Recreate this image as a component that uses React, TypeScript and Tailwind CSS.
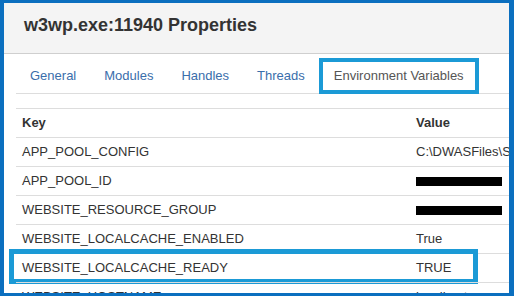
const rows: { key: string; value: string; redacted?: boolean; marked?: boolean }[] = [
  { key: "APP_POOL_CONFIG", value: "C:\\DWASFiles\\Sites" },
  { key: "APP_POOL_ID", value: "", redacted: true },
  { key: "WEBSITE_RESOURCE_GROUP", value: "", redacted: true },
  { key: "WEBSITE_LOCALCACHE_ENABLED", value: "True" },
  { key: "WEBSITE_LOCALCACHE_READY", value: "TRUE", marked: true },
  { key: "WEBSITE_HOSTNAME", value: "localhost" },
];

const tabs = ["General", "Modules", "Handles", "Threads"];

export default function App() {
  return (
    <div
      className="w-[514px] h-[296px] overflow-hidden border-[#0b6fbf] border-l-4 border-t-[3px] border-r-[5px] border-b-[3px] bg-white text-[#333]"
      style={{ fontFamily: '"Liberation Sans", Arial, sans-serif' }}
    >
      <div className="h-[51px] flex items-center pb-[6px] pl-[20px] bg-[#f4f4f4] border-b border-[#cfcfcf]">
        <h1 className="text-[18px] font-bold leading-none">w3wp.exe:11940 Properties</h1>
      </div>

      <div className="pl-[12px]">
        <div className="flex pt-[4px] border-b border-[#dddddd] text-[13px]">
          {tabs.map((t) => (
            <div key={t} className="h-[35px] flex items-center px-[14px] text-[#3a6eab]">
              {t}
            </div>
          ))}
          <div className="h-[36px] -mb-px flex items-center px-[11px] border-4 border-[#1b9ad6] bg-white text-[#555]">
            Environment Variables
          </div>
        </div>

        <div className="mt-[14px] w-[520px] text-[13px]">
          <div className="flex h-[29px] items-center border-t border-[#dddddd] font-bold">
            <div className="w-[394px] shrink-0 pl-[6px]">Key</div>
            <div className="pl-[6px]">Value</div>
          </div>
          {rows.map((r) => (
            <div key={r.key} className="relative flex h-[29px] items-center border-t border-[#dddddd] whitespace-nowrap">
              <div className="w-[394px] shrink-0 pl-[6px]">{r.key}</div>
              <div className="pl-[6px]">
                {r.redacted ? <span className="block w-[86px] h-[9px] bg-black" /> : r.value}
              </div>
              {r.marked && (
                <div className="absolute -left-[7px] -top-[5px] w-[469px] h-[35px] border-[5px] border-[#1b9ad6]" />
              )}
            </div>
          ))}
        </div>
      </div>
    </div>
  );
}
